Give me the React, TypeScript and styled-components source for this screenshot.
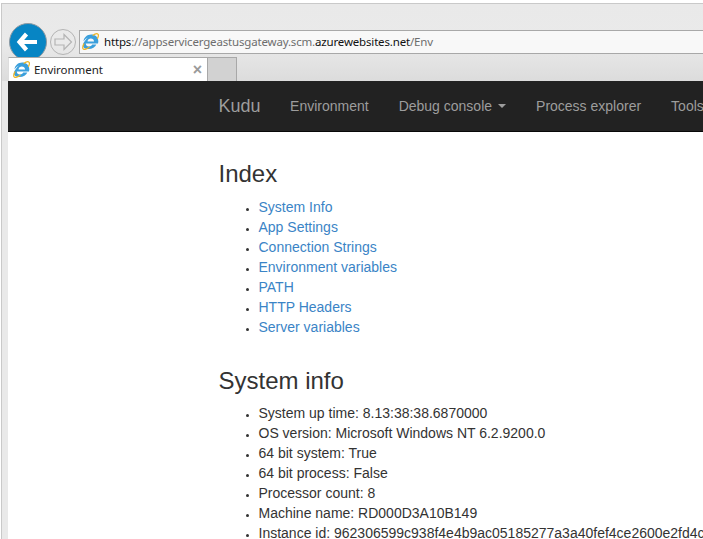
import React from "react";
import styled, { createGlobalStyle } from "styled-components";

const Global = createGlobalStyle`
  html, body { margin: 0; padding: 0; width: 703px; height: 539px; overflow: hidden; background: #fff; }
  #root { width: 703px; height: 539px; }
  * { box-sizing: border-box; }
`;

const Page = styled.div`
  width: 703px;
  height: 539px;
  overflow: hidden;
  padding: 3px 0 0 1px;
  background: #fff;
`;

const Window = styled.div`
  width: 702px;
  height: 536px;
  display: flex;
  flex-direction: column;
  background: #e9e9e9;
  border-top: 1px solid #c9c9c9;
  border-left: 1px solid #c9c9c9;
`;

const Chrome = styled.div`
  flex: none;
  height: 77px;
  padding: 19px 0 0 6px;
  display: flex;
  flex-direction: column;
  background: linear-gradient(#e9e9e9 0, #eaeaea 50%, #dcdcdc 100%);
`;

const Toolbar = styled.div`
  flex: none;
  height: 37px;
  padding-left: 1px;
  display: flex;
  align-items: center;
`;

const BackButton = styled.div`
  flex: none;
  width: 38px;
  height: 38px;
  border-radius: 50%;
  background: #0785c4;
  border: 1px solid #8d9aa3;
  display: flex;
  align-items: center;
  justify-content: center;
`;

const ForwardButton = styled.div`
  flex: none;
  width: 26px;
  height: 26px;
  margin-left: 3px;
  border-radius: 50%;
  border: 1px solid #b4b4b4;
  display: flex;
  align-items: center;
  justify-content: center;
`;

const AddressBar = styled.div`
  flex: none;
  width: 624px;
  height: 24px;
  margin-left: 3px;
  padding-left: 2px;
  display: flex;
  align-items: center;
  background: #f8f8f8;
  border: 1px solid #a8a8a8;
  border-right: none;
`;

const Url = styled.span`
  margin-left: 5px;
  font: 11.5px "Noto Sans", sans-serif;
  letter-spacing: -0.17px;
  color: #6d6d6d;
  white-space: nowrap;
`;

const UrlStrong = styled.span`
  color: #111;
`;

const TabStrip = styled.div`
  flex: none;
  height: 24px;
  margin-top: -3px;
  position: relative;
  display: flex;
`;

const ActiveTab = styled.div`
  flex: none;
  width: 200px;
  height: 24px;
  padding: 0 5px 0 4px;
  display: flex;
  align-items: center;
  background: #fff;
  border: 1px solid #a8a8a8;
  border-left-color: #ddd;
  border-bottom: none;
`;

const TabTitle = styled.span`
  flex: 1;
  margin-left: 4px;
  font: 11.5px "Noto Sans", sans-serif;
  letter-spacing: -0.05px;
  color: #222;
  white-space: nowrap;
`;

const TabClose = styled.span`
  flex: none;
  font: bold 16px "Liberation Sans", sans-serif;
  color: #9a9a9a;
  line-height: 1;
`;

const NewTab = styled.div`
  flex: none;
  width: 29px;
  height: 24px;
  background: #d2d2d2;
  border: 1px solid #a8a8a8;
  border-left: none;
  border-bottom: none;
`;

const Viewport = styled.div`
  flex: 1;
  min-height: 0;
  margin-left: 6px;
  background: #fff;
  overflow: hidden;
  font: 14px/20px "Liberation Sans", Arial, sans-serif;
  color: #333;
`;

const Navbar = styled.nav`
  height: 51px;
  padding-left: 195.5px;
  display: flex;
  align-items: center;
  background: #222;
  border-bottom: 1px solid #080808;
  white-space: nowrap;
`;

const Brand = styled.span`
  font-size: 18px;
  color: #9d9d9d;
  margin: 0 29.5px 0 15px;
`;

const NavItem = styled.span`
  color: #9d9d9d;
  margin-right: 30px;
  display: inline-flex;
  align-items: center;
`;

const Caret = styled.span`
  display: inline-block;
  margin-left: 6px;
  border-top: 4px solid #9d9d9d;
  border-left: 4px solid transparent;
  border-right: 4px solid transparent;
`;

const Content = styled.main`
  padding-left: 210.5px;
  width: 900px;
`;

const Heading = styled.h3`
  margin: 0;
  font-size: 24px;
  font-weight: 400;
  line-height: 26px;
  color: #333;
`;

const List = styled.ul`
  margin: 10px 0 0;
  padding: 0 0 0 40px;
  white-space: nowrap;
  & > li::marker {
    font-size: 11px;
  }
`;

const Link = styled.a`
  color: #3a84c6;
  text-decoration: none;
`;

const IndexSection = styled.section`
  padding-top: 29px;
`;

const InfoSection = styled.section`
  padding-top: 31px;
`;

const InfoList = styled(List)`
  margin-top: 9px;
`;

const IeIcon = ({ size }: { size: number }) => (
  <svg width={size} height={size} viewBox="0 0 20 20" style={{ flex: "none" }}>
    <path
      d="M15.800 12.300h3c.3-1 .4-1.900.4-2.600C19.200 5 15.400 1.800 10.800 1.800 6 1.800 2.300 5.200 1.700 9.800 3.100 7.700 5 6 7.100 5.200 4.200 7.500 2 10.600 1 13.900c-.3 3.300 2.600 5 6.600 5 4.600 0 8-2.100 9.300-5.300h-4.800c-.7 1.400-2.200 2.200-3.900 2.200-2.100 0-3.700-1.300-3.800-3.500h10.400zM6.500 10c.1-2.100 1.900-3.600 3.900-3.600 2.100 0 3.700 1.500 3.800 3.600H6.500z"
      fill="#3a9fdc"
      fillRule="evenodd"
    />
    <path d="M2.400 12.400C.8 15.600.4 18 1.500 18.900c1.300 1 4.200-.1 7.300-2.400" fill="none" stroke="#eeb422" strokeWidth="1.500" />
    <path d="M12.500 3c2.700-1.900 5.100-2.700 6.200-1.700 1 .9.700 2.900-.6 5.500" fill="none" stroke="#eeb422" strokeWidth="1.500" />
  </svg>
);

const indexLinks = [
  "System Info",
  "App Settings",
  "Connection Strings",
  "Environment variables",
  "PATH",
  "HTTP Headers",
  "Server variables",
];

const systemInfo = [
  "System up time: 8.13:38:38.6870000",
  "OS version: Microsoft Windows NT 6.2.9200.0",
  "64 bit system: True",
  "64 bit process: False",
  "Processor count: 8",
  "Machine name: RD000D3A10B149",
  "Instance id: 962306599c938f4e4b9ac05185277a3a40fef4ce2600e2fd4c",
];

export default function App() {
  return (
    <Page>
      <Global />
      <Window>
        <Chrome>
          <Toolbar>
            <BackButton>
              <svg width="24" height="22" viewBox="0 0 24 22">
                <path d="M10.500 3 3.500 11l7 8M4 11h17" fill="none" stroke="#fff" strokeWidth="4.200" />
              </svg>
            </BackButton>
            <ForwardButton>
              <svg width="20" height="18" viewBox="0 0 20 18">
                <path d="M11 1.500 18.500 9 11 16.500v-4.500H2V6h9z" fill="none" stroke="#b4b4b4" strokeWidth="1.200" />
              </svg>
            </ForwardButton>
            <AddressBar>
              <IeIcon size={17} />
              <Url>
                <UrlStrong>https</UrlStrong>://appservicergeastusgateway.scm.
                <UrlStrong>azurewebsites.net</UrlStrong>/Env
              </Url>
            </AddressBar>
          </Toolbar>
          <TabStrip>
            <ActiveTab>
              <IeIcon size={17} />
              <TabTitle>Environment</TabTitle>
              <TabClose>×</TabClose>
            </ActiveTab>
            <NewTab />
          </TabStrip>
        </Chrome>
        <Viewport>
          <Navbar>
            <Brand>Kudu</Brand>
            <NavItem>Environment</NavItem>
            <NavItem>
              Debug console
              <Caret />
            </NavItem>
            <NavItem>Process explorer</NavItem>
            <NavItem>Tools</NavItem>
          </Navbar>
          <Content>
            <IndexSection>
              <Heading>Index</Heading>
              <List>
                {indexLinks.map((l) => (
                  <li key={l}>
                    <Link href="#">{l}</Link>
                  </li>
                ))}
              </List>
            </IndexSection>
            <InfoSection>
              <Heading>System info</Heading>
              <InfoList>
                {systemInfo.map((l) => (
                  <li key={l}>{l}</li>
                ))}
              </InfoList>
            </InfoSection>
          </Content>
        </Viewport>
      </Window>
    </Page>
  );
}
